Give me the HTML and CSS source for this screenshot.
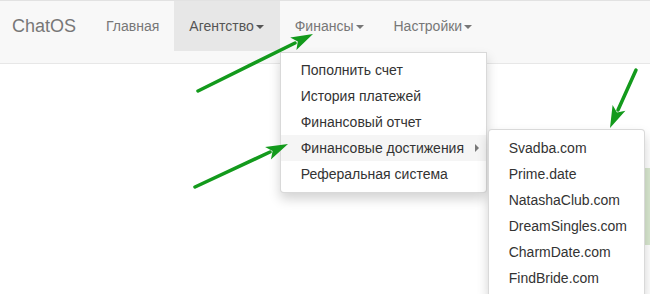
FILE: index.html
```html
<!DOCTYPE html>
<html lang="ru">
<head>
    <meta charset="UTF-8">
    <meta name="viewport" content="width=device-width, initial-scale=1.0">
    <title>ChatOS</title>
    <link rel="stylesheet" href="styles.css">
</head>
<body>
    <nav class="navbar">
        <a class="brand" href="#">ChatOS</a>
        <ul class="nav">
            <li><a href="#">Главная</a></li>
            <li class="active"><a href="#">Агентство<span class="caret"></span></a></li>
            <li class="dropdown">
                <a href="#">Финансы<span class="caret"></span></a>
                <ul class="dropdown-menu finance-menu">
                    <li><a href="#">Пополнить счет</a></li>
                    <li><a href="#">История платежей</a></li>
                    <li><a href="#">Финансовый отчет</a></li>
                    <li class="submenu open">
                        <a href="#">Финансовые достижения<span class="caret-right"></span></a>
                        <ul class="dropdown-menu sites-menu">
                            <li><a href="#">Svadba.com</a></li>
                            <li><a href="#">Prime.date</a></li>
                            <li><a href="#">NatashaClub.com</a></li>
                            <li><a href="#">DreamSingles.com</a></li>
                            <li><a href="#">CharmDate.com</a></li>
                            <li><a href="#">FindBride.com</a></li>
                        </ul>
                    </li>
                    <li><a href="#">Реферальная система</a></li>
                </ul>
            </li>
            <li><a href="#">Настройки<span class="caret"></span></a></li>
        </ul>
    </nav>

    <div class="page">
        <div class="notice"></div>
    </div>

    <!-- стрелки-пометки поверх скриншота -->
    <svg class="marks" width="650" height="294" viewBox="0 0 650 294">
        <g stroke="#139a1c" stroke-width="3.5" stroke-linecap="round" fill="none">
            <line x1="198" y1="91" x2="295" y2="43"/>
            <line x1="195" y1="187" x2="270" y2="152"/>
            <line x1="636" y1="70" x2="618" y2="110"/>
        </g>
        <g fill="#139a1c">
            <polygon points="313,34 296.4,50.1 297.8,41.5 290.2,37.5"/>
            <polygon points="288,144 270.9,159.5 272.6,151.1 265.1,146.9"/>
            <polygon points="610,128 625.4,110.8 617,112.5 612.6,105"/>
        </g>
    </svg>
</body>
</html>
```

FILE: styles.css
```css
body {
    margin: 0;
    padding: 0;
    font-family: 'Liberation Sans', Arial, sans-serif;
    font-size: 14px;
    line-height: 20px;
    color: #333;
    background: #fff;
    overflow: hidden;
}

a {
    text-decoration: none;
}

ul {
    list-style: none;
    margin: 0;
    padding: 0;
}

.navbar {
    display: flex;
    align-items: flex-start;
    height: 62px;
    background: #f8f8f8;
    border-top: 1px solid #e2e2e2;
    border-bottom: 1px solid #e7e7e7;
    position: relative;
    z-index: 5;
}

.brand {
    padding: 15px 15px 15px 12px;
    font-size: 18px;
    color: #777;
}

.nav {
    display: flex;
}

.nav > li {
    position: relative;
}

.nav > li > a {
    display: block;
    padding: 15px 15px;
    color: #777;
}

.nav > li.active > a {
    background: #e7e7e7;
    color: #555;
    padding-right: 16px;
}

.caret {
    display: inline-block;
    width: 0;
    height: 0;
    margin-left: 2px;
    vertical-align: middle;
    border-top: 4px solid;
    border-left: 4px solid transparent;
    border-right: 4px solid transparent;
}

.dropdown-menu {
    position: absolute;
    background: #fff;
    border: 1px solid rgba(0,0,0,0.15);
    box-shadow: 0 6px 12px rgba(0,0,0,0.175);
    box-sizing: border-box;
    padding: 5px 0;
}

.dropdown-menu a {
    display: block;
    padding: 3px 20px;
    color: #333;
    white-space: nowrap;
}

.finance-menu {
    top: 100%;
    left: 0;
    margin-top: 1px;
    padding-top: 4px;
    width: 207px;
    border-radius: 0 0 4px 4px;
}

.submenu {
    position: relative;
}

.submenu > a {
    display: flex;
    align-items: center;
    padding-right: 7px;
}

.submenu.open > a {
    background: #f5f5f5;
}

.caret-right {
    margin-left: auto;
    width: 0;
    height: 0;
    border-left: 4px solid #777;
    border-top: 4px solid transparent;
    border-bottom: 4px solid transparent;
}

.sites-menu {
    top: 0;
    left: 100%;
    margin-top: -6px;
    margin-left: 2px;
    width: 157px;
    border-radius: 4px;
}

.page {
    position: relative;
    height: 230px;
}

/* бледно-зелёная плашка, почти скрытая под меню */
.notice {
    position: absolute;
    left: 500px;
    top: 104px;
    width: 150px;
    height: 77px;
    background: #d9e8d0;
}

.marks {
    position: absolute;
    left: 0;
    top: 0;
    z-index: 10;
    pointer-events: none;
}
```
